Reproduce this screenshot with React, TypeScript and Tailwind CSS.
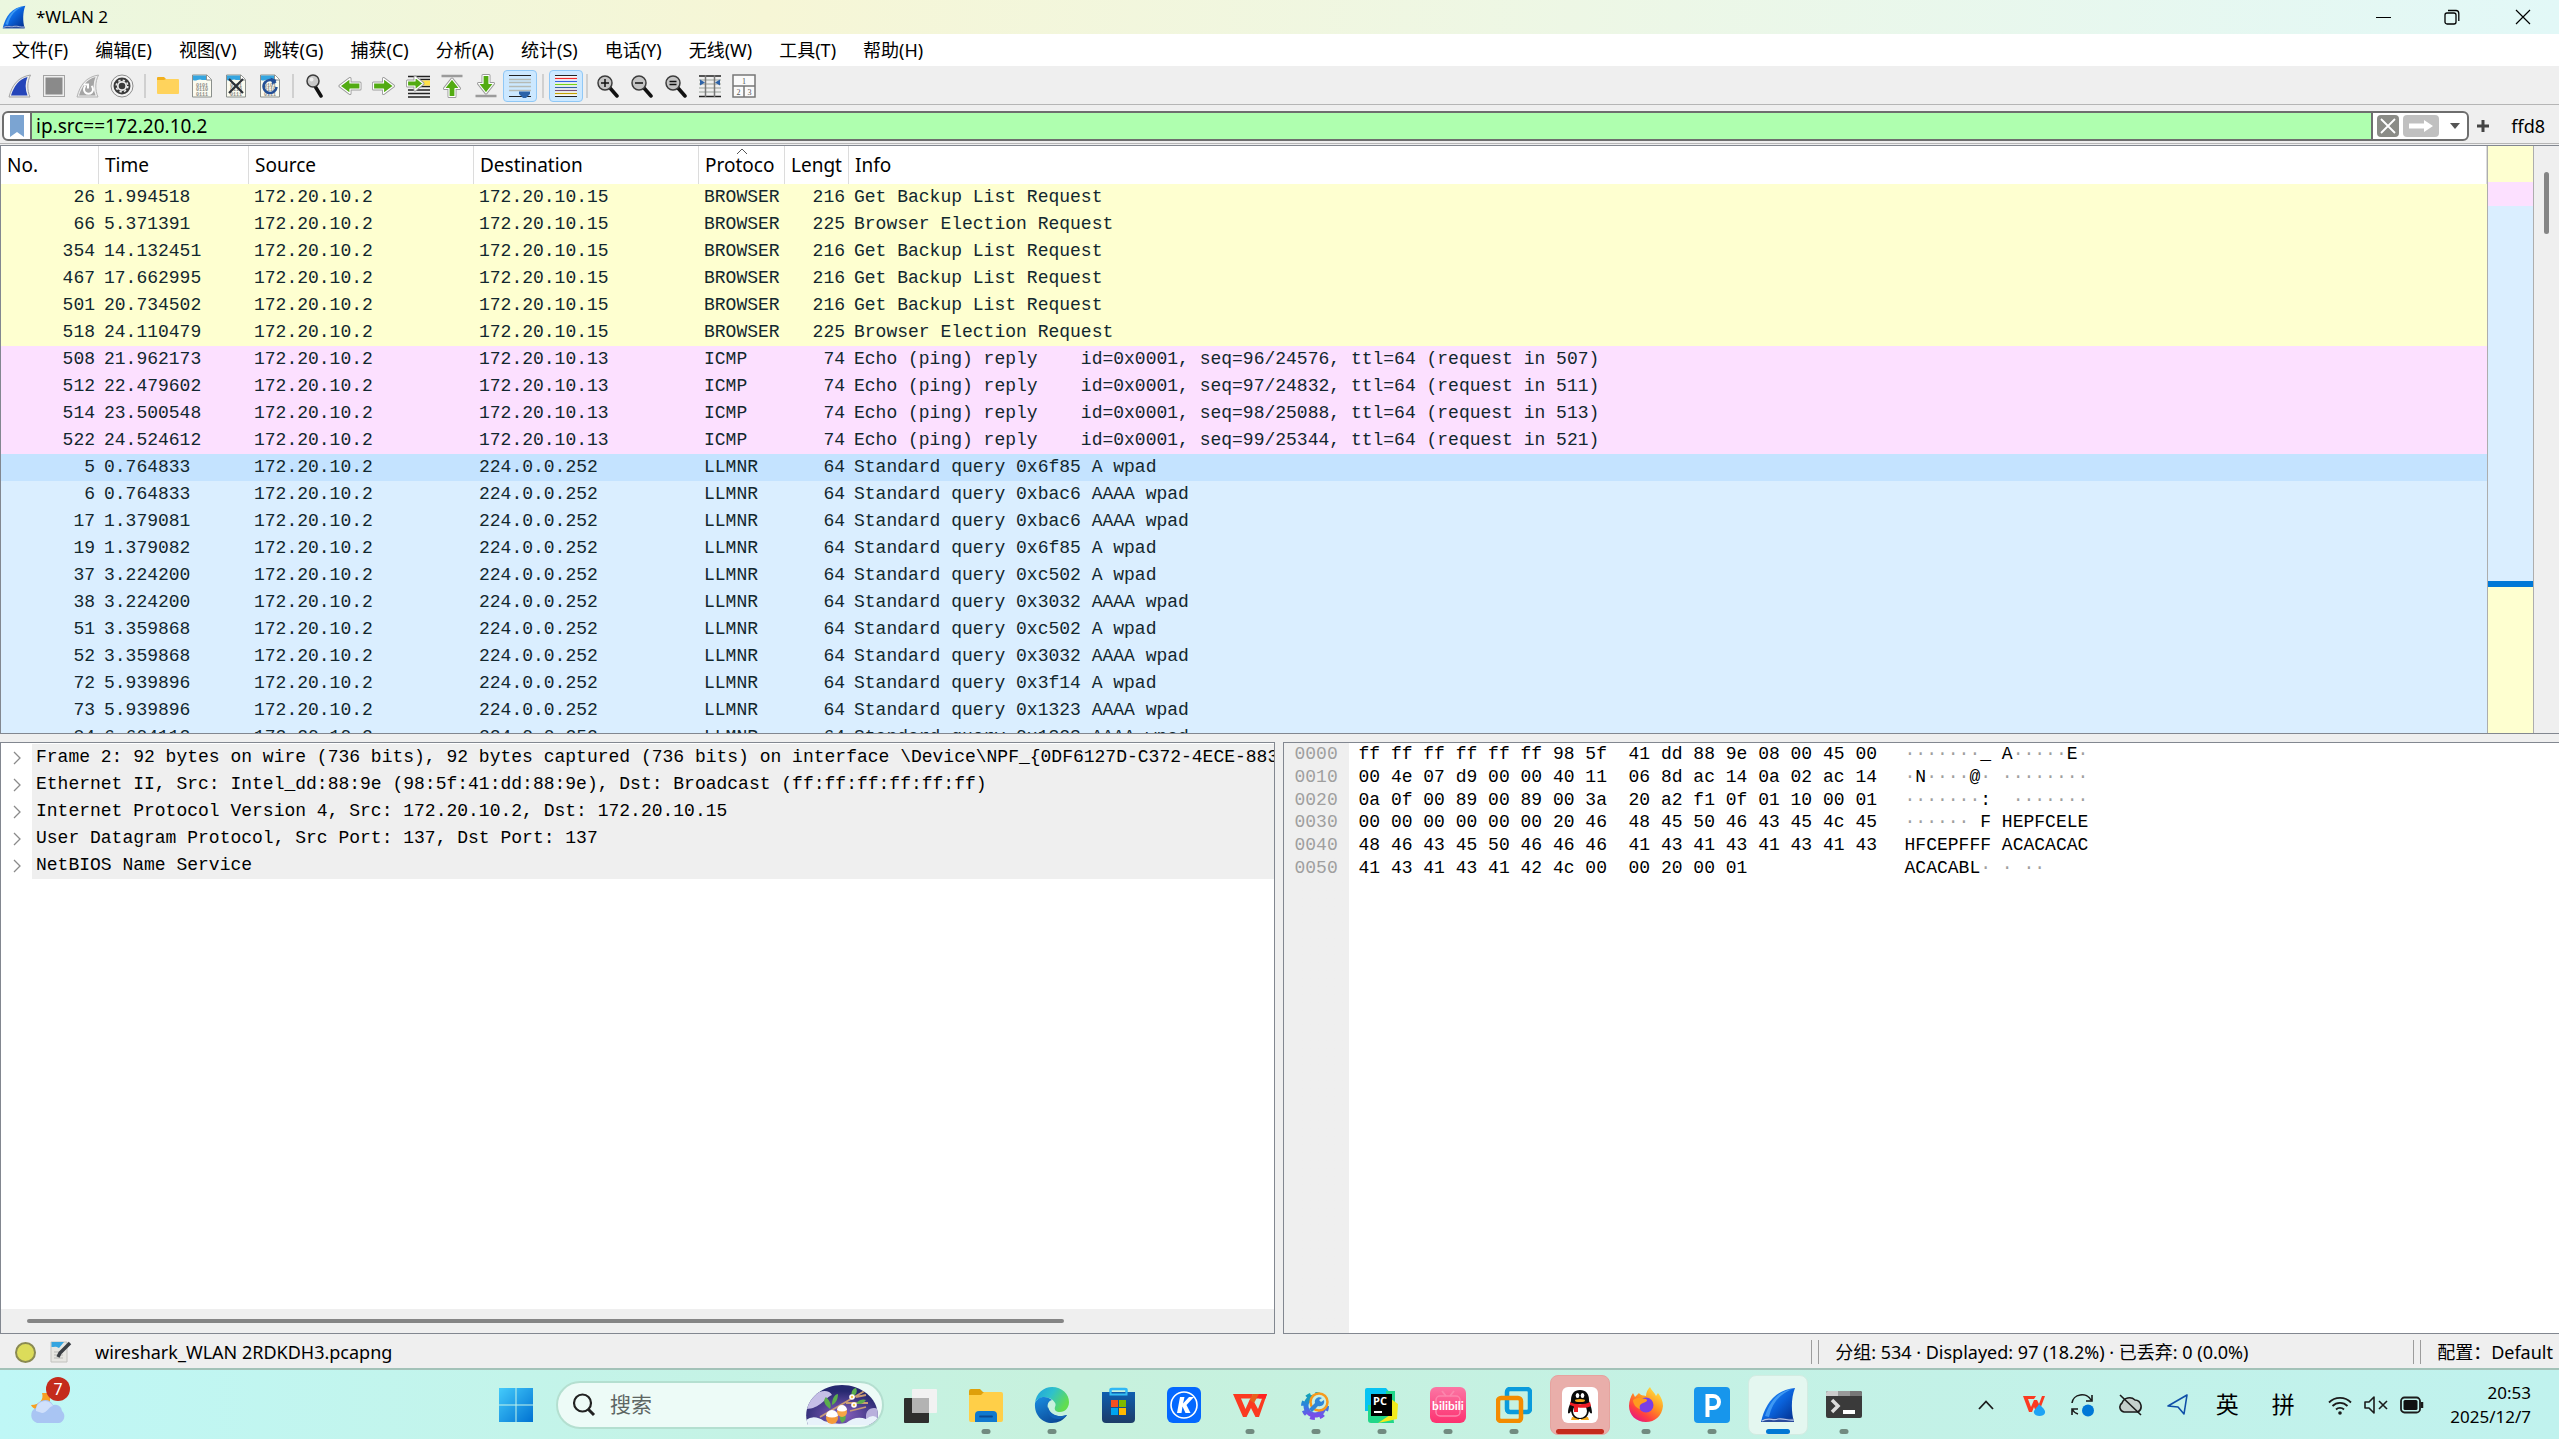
import React from "react";

const UI = "font-['Noto_Sans','Noto_Sans_CJK_SC',sans-serif]";
const MONO = "font-['Liberation_Mono','Noto_Sans_CJK_SC',monospace]";

type Kids = { children?: React.ReactNode };

/* ---------- title bar and toolbar drawings ---------- */

function Fin({ className, uid }: { className: string; uid: string }) {
  return (
    <svg viewBox="0 0 36 36" className={className} aria-hidden="true">
      <defs>
        <linearGradient id={uid} x1="0" y1="0" x2="1" y2="1">
          <stop offset="0" stopColor="#2f9bff" />
          <stop offset="0.5" stopColor="#0a63dc" />
          <stop offset="1" stopColor="#022a86" />
        </linearGradient>
      </defs>
      <path d="M1 35C5 18 14 3 35 1C31 11 31 24 34 35Z" fill={`url(#${uid})`} />
      <path d="M5 29C11 12 20 4 32 2C20 7 12 16 9 30Z" fill="#5db5ff" opacity=".6" />
      <path d="M1 35C6 29 12 32 17 31C23 30 28 33 33 31L34 35Z" fill="#2a4c9c" />
      <path d="M2 34C8 30 13 34 18 32C24 31 28 34 34 33" stroke="#b7c8ec" strokeWidth="1.2" fill="none" />
    </svg>
  );
}

function Ico({ children }: Kids) {
  return (
    <svg viewBox="0 0 24 24" className="size-6" aria-hidden="true">
      {children}
    </svg>
  );
}

function Paper({ children }: Kids) {
  return (
    <Ico>
      <path d="M2.5 1H17L21.5 5.5V23H2.5Z" fill="#fbfbf0" stroke="#8a8f8c" />
      <path d="M3 1.500H16.500V6H12C9 4 6 8 3 6Z" fill="#35a5e0" />
      <path d="M16.500 1V6H21.500" fill="#fff" stroke="#8a8f8c" />
      <g fill="#8c8c88" fontSize="5" fontFamily="Liberation Mono" fontWeight="700" textAnchor="middle">
        <text x="12" y="12.500">0101</text>
        <text x="12" y="17">0110</text>
        <text x="12" y="21.500">0111</text>
      </g>
      {children}
    </Ico>
  );
}

function Arrow({ d }: { d: string }) {
  return (
    <>
      <path d={d} fill="#fff" stroke="#9b9b9b" strokeWidth="3" strokeLinejoin="round" />
      <path d={d} fill="#52ab12" stroke="#fff" strokeWidth="1.2" strokeLinejoin="round" />
    </>
  );
}

function Lens({ sign }: { sign: string }) {
  return (
    <Ico>
      <path d="M14 14L21 22" stroke="#111" strokeWidth="3.500" strokeLinecap="round" />
      <circle cx="9" cy="9" r="7" fill="#c4c4c4" stroke="#3c3c3c" strokeWidth="1.500" />
      <path d={sign} stroke="#111" strokeWidth="1.500" />
    </Ico>
  );
}

const toolGroups: { name: string; icon: React.ReactNode; on?: boolean }[][] = [
  [
    {
      name: "开始捕获",
      icon: (
        <Ico>
          <path d="M1 23C4 11 10 3 22.500 1C19 8 19 16 22 23Z" fill="#eee" stroke="#a3a3a3" />
          <path d="M3 21.500C6 12 11 5 19.500 3C17 9 17 15 19.500 21.500Z" fill="#2545b9" />
        </Ico>
      ),
    },
    {
      name: "停止捕获",
      icon: (
        <Ico>
          <rect x="1.500" y="1.500" width="21" height="21" fill="#eee" stroke="#a3a3a3" />
          <rect x="3.500" y="3.500" width="17" height="17" fill="#8a8a8a" />
        </Ico>
      ),
    },
    {
      name: "重新捕获",
      icon: (
        <Ico>
          <path d="M1 23C4 11 10 3 22.500 1C19 8 19 16 22 23Z" fill="#eee" stroke="#b3b3b3" />
          <path d="M3 21.500C6 12 11 5 19.500 3C17 9 17 15 19.500 21.500Z" fill="#a5a5a5" />
          <path d="M9.500 12A4.500 4.500 0 1 0 15.500 12M8 10.500H12V14.500" stroke="#fff" strokeWidth="2" fill="none" />
        </Ico>
      ),
    },
    {
      name: "捕获选项",
      icon: (
        <Ico>
          <circle cx="12" cy="12" r="11" fill="#f4f4f4" stroke="#8c8c8c" />
          <circle cx="12" cy="12" r="8.500" fill="#3b3b3b" />
          <circle cx="12" cy="12" r="4.200" fill="none" stroke="#e9e9e9" strokeWidth="1.800" />
          <circle cx="12" cy="12" r="5.800" fill="none" stroke="#e9e9e9" strokeWidth="1.600" strokeDasharray="2.280 2.280" />
        </Ico>
      ),
    },
  ],
  [
    {
      name: "打开",
      icon: (
        <Ico>
          <path d="M1 4Q1 3 2 3H8L10 5H12V9H1Z" fill="#f2b01e" />
          <path d="M1 6H8L10 5H22Q23 5 23 6V19Q23 20 22 20H2Q1 20 1 19Z" fill="#ffd35c" />
        </Ico>
      ),
    },
    { name: "保存", icon: <Paper /> },
    {
      name: "关闭文件",
      icon: (
        <Paper>
          <path d="M5 5L19 19M19 5L5 19" stroke="#2b2f36" strokeWidth="2.200" />
        </Paper>
      ),
    },
    {
      name: "重新加载",
      icon: (
        <Paper>
          <path d="M17.500 9A6.500 6.500 0 1 0 18.500 13" stroke="#234f96" strokeWidth="2.500" fill="none" />
          <path d="M12.500 3.500L18.500 6L14.500 11Z" fill="#234f96" />
        </Paper>
      ),
    },
  ],
  [
    {
      name: "查找分组",
      icon: (
        <Ico>
          <path d="M11.500 13L17 22" stroke="#111" strokeWidth="3.500" strokeLinecap="round" />
          <circle cx="9" cy="7" r="6" fill="#c9c9c9" stroke="#3c3c3c" strokeWidth="1.500" />
          <circle cx="7.500" cy="5.500" r="2" fill="#eee" />
        </Ico>
      ),
    },
    { name: "后退", icon: <Ico><Arrow d="M22 9H12V4.500L2 12L12 19.500V15H22Z" /></Ico> },
    { name: "前进", icon: <Ico><Arrow d="M1.500 9H11.500V4.500L21.500 12L11.500 19.500V15H1.500Z" /></Ico> },
    {
      name: "转到分组",
      icon: (
        <Ico>
          <path d="M2 2.500H24M14 5.500H24M14 12.500H24M2 16H24M2 19.500H24M2 23H24" stroke="#222" strokeWidth="1.300" />
          <rect x="15" y="6.500" width="9" height="5" fill="#ffe14a" />
          <Arrow d="M1.500 7H9V3L17 9.500L9 16V12H1.500Z" />
        </Ico>
      ),
    },
    {
      name: "首个分组",
      icon: (
        <Ico>
          <path d="M1.500 2H22.500" stroke="#9b9b9b" strokeWidth="2.500" />
          <Arrow d="M9 22.500V14.500H4.500L12 5L19.500 14.500H15V22.500Z" />
        </Ico>
      ),
    },
    {
      name: "末个分组",
      icon: (
        <Ico>
          <path d="M1.500 22H22.500" stroke="#9b9b9b" strokeWidth="2.500" />
          <Arrow d="M9 1.500V9.500H4.500L12 19L19.500 9.500H15V1.500Z" />
        </Ico>
      ),
    },
    {
      name: "自动滚动",
      on: true,
      icon: (
        <Ico>
          <path d="M1 1.500H23M1 22.500H23" stroke="#222" strokeWidth="1.200" />
          <path d="M1 5.500H23M1 8.500H23M1 12.500H23M1 16.500H23" stroke="#b5bab5" strokeWidth="1.500" />
          <path d="M11 17.500H22V20L18 24H15L11 20Z" fill="#2b62a8" />
        </Ico>
      ),
    },
  ],
  [
    {
      name: "着色",
      on: true,
      icon: (
        <Ico>
          <rect x="1" y="1" width="22" height="22" fill="#f3f6f8" />
          <g strokeWidth="1.200">
            <path d="M1 1.500H23M1 22.500H23" stroke="#222" />
            <path d="M1 4.500H23" stroke="#ef2929" />
            <path d="M1 7.500H23" stroke="#3465e0" />
            <path d="M1 10.500H23" stroke="#73d216" />
            <path d="M1 13.500H23" stroke="#3465a4" />
            <path d="M1 16.500H23" stroke="#75507b" />
            <path d="M1 19.500H23" stroke="#c4a000" />
          </g>
        </Ico>
      ),
    },
  ],
  [
    { name: "放大", icon: <Lens sign="M5 9H13M9 5V13" /> },
    { name: "缩小", icon: <Lens sign="M5 9H13" /> },
    { name: "正常大小", icon: <Lens sign="M5.500 7.500H12.500M5.500 10.500H12.500" /> },
    {
      name: "调整列宽",
      icon: (
        <Ico>
          <path d="M1 2H23M1 22.500H23" stroke="#222" strokeWidth="1.300" />
          <path d="M1 6H23M1 10H23M1 14H23M1 18H23" stroke="#b5bab5" strokeWidth="1.500" />
          <path d="M7.500 1V23M16.500 1V23" stroke="#777" strokeWidth="1.500" />
          <path d="M2 5.500L7 8.500L2 11.500ZM22 5.500L17 8.500L22 11.500Z" fill="#2b62a8" />
        </Ico>
      ),
    },
    {
      name: "重置布局",
      icon: (
        <Ico>
          <path d="M1 1H23V23H1ZM1 12H23M12 12V23" fill="#fafafa" stroke="#777" strokeWidth="1.500" />
          <g fontSize="8" fill="#555" fontFamily="Liberation Serif" textAnchor="middle">
            <text x="12" y="9.500">1</text>
            <text x="6.500" y="20.500">2</text>
            <text x="17.500" y="20.500">3</text>
          </g>
        </Ico>
      ),
    },
  ],
];

/* ---------- data ---------- */

const menus = ["文件(F)", "编辑(E)", "视图(V)", "跳转(G)", "捕获(C)", "分析(A)", "统计(S)", "电话(Y)", "无线(W)", "工具(T)", "帮助(H)"];

type Packet = [string, string, string, string, string, string];
const ping = (n: number, s: string, r: number) => `Echo (ping) reply    id=0x0001, seq=${n}/${s}, ttl=64 (request in ${r})`;
const packets: Packet[] = [
  ["26", "1.994518", "172.20.10.15", "BROWSER", "216", "Get Backup List Request"],
  ["66", "5.371391", "172.20.10.15", "BROWSER", "225", "Browser Election Request"],
  ["354", "14.132451", "172.20.10.15", "BROWSER", "216", "Get Backup List Request"],
  ["467", "17.662995", "172.20.10.15", "BROWSER", "216", "Get Backup List Request"],
  ["501", "20.734502", "172.20.10.15", "BROWSER", "216", "Get Backup List Request"],
  ["518", "24.110479", "172.20.10.15", "BROWSER", "225", "Browser Election Request"],
  ["508", "21.962173", "172.20.10.13", "ICMP", "74", ping(96, "24576", 507)],
  ["512", "22.479602", "172.20.10.13", "ICMP", "74", ping(97, "24832", 511)],
  ["514", "23.500548", "172.20.10.13", "ICMP", "74", ping(98, "25088", 513)],
  ["522", "24.524612", "172.20.10.13", "ICMP", "74", ping(99, "25344", 521)],
  ["5", "0.764833", "224.0.0.252", "LLMNR", "64", "Standard query 0x6f85 A wpad"],
  ["6", "0.764833", "224.0.0.252", "LLMNR", "64", "Standard query 0xbac6 AAAA wpad"],
  ["17", "1.379081", "224.0.0.252", "LLMNR", "64", "Standard query 0xbac6 AAAA wpad"],
  ["19", "1.379082", "224.0.0.252", "LLMNR", "64", "Standard query 0x6f85 A wpad"],
  ["37", "3.224200", "224.0.0.252", "LLMNR", "64", "Standard query 0xc502 A wpad"],
  ["38", "3.224200", "224.0.0.252", "LLMNR", "64", "Standard query 0x3032 AAAA wpad"],
  ["51", "3.359868", "224.0.0.252", "LLMNR", "64", "Standard query 0xc502 A wpad"],
  ["52", "3.359868", "224.0.0.252", "LLMNR", "64", "Standard query 0x3032 AAAA wpad"],
  ["72", "5.939896", "224.0.0.252", "LLMNR", "64", "Standard query 0x3f14 A wpad"],
  ["73", "5.939896", "224.0.0.252", "LLMNR", "64", "Standard query 0x1323 AAAA wpad"],
  ["84", "6.604112", "224.0.0.252", "LLMNR", "64", "Standard query 0x1323 AAAA wpad"],
];

const rowTone: Record<string, string> = {
  BROWSER: "bg-[#feffd0]",
  ICMP: "bg-[#fce0ff]",
  LLMNR: "bg-[#daeeff]",
};

const details = [
  "Frame 2: 92 bytes on wire (736 bits), 92 bytes captured (736 bits) on interface \\Device\\NPF_{0DF6127D-C372-4ECE-8836-",
  "Ethernet II, Src: Intel_dd:88:9e (98:5f:41:dd:88:9e), Dst: Broadcast (ff:ff:ff:ff:ff:ff)",
  "Internet Protocol Version 4, Src: 172.20.10.2, Dst: 172.20.10.15",
  "User Datagram Protocol, Src Port: 137, Dst Port: 137",
  "NetBIOS Name Service",
];

const hex = [
  ["0000", "ff ff ff ff ff ff 98 5f  41 dd 88 9e 08 00 45 00", "·······_ A·····E·"],
  ["0010", "00 4e 07 d9 00 00 40 11  06 8d ac 14 0a 02 ac 14", "·N····@· ········"],
  ["0020", "0a 0f 00 89 00 89 00 3a  20 a2 f1 0f 01 10 00 01", "·······:  ·······"],
  ["0030", "00 00 00 00 00 00 20 46  48 45 50 46 43 45 4c 45", "······ F HEPFCELE"],
  ["0040", "48 46 43 45 50 46 46 46  41 43 41 43 41 43 41 43", "HFCEPFFF ACACACAC"],
  ["0050", "41 43 41 43 41 42 4c 00  00 20 00 01", "ACACABL· · ··"],
];

/* ---------- taskbar drawings ---------- */

function App36({ children }: Kids) {
  return (
    <svg viewBox="0 0 36 36" className="size-9" aria-hidden="true">
      {children}
    </svg>
  );
}

const apps: { name: string; icon: React.ReactNode; mark?: string; box?: string }[] = [
  {
    name: "任务视图",
    icon: (
      <App36>
        <rect x="2" y="11" width="25" height="25" rx="1" fill="#2e2e2d" />
        <rect x="10" y="2" width="25" height="24" rx="1" fill="#f2f2f2" />
        <rect x="10" y="11" width="17" height="15" fill="#b3b3b3" />
      </App36>
    ),
  },
  {
    name: "文件资源管理器",
    mark: "w-[9px] bg-[#718b80]",
    icon: (
      <App36>
        <path d="M1 4Q1 2 3 2H12L15 5H33V12H1Z" fill="#dfa00a" />
        <path d="M1 8H13L16 5H33Q35 5 35 7V33Q35 35 33 35H3Q1 35 1 33Z" fill="#ffcf48" />
        <path d="M7 35V28Q7 24 11 24H25Q29 24 29 28V35Z" fill="#0f79cf" />
        <path d="M12 29.500H24" stroke="#0a4a92" strokeWidth="1.800" strokeLinecap="round" />
      </App36>
    ),
  },
  {
    name: "Edge",
    mark: "w-[9px] bg-[#718b80]",
    icon: (
      <App36>
        <defs>
          <linearGradient id="edgeTop" x1="0" y1="0" x2="1" y2=".5">
            <stop offset="0" stopColor="#1f9fe0" />
            <stop offset=".5" stopColor="#2fc1cb" />
            <stop offset="1" stopColor="#62dd4f" />
          </linearGradient>
          <linearGradient id="edgeLow" x1="0" y1="0" x2=".6" y2="1">
            <stop offset="0" stopColor="#1a8fe3" />
            <stop offset="1" stopColor="#0b4a98" />
          </linearGradient>
        </defs>
        <path d="M1 16C2 6 10 0 18 0C28 0 35 7 35 15C35 21 31 25 26 25C22 25 20 23 21 20C23 17 20 13 15 11C9 9 3 11 1 16Z" fill="url(#edgeTop)" />
        <path d="M1 16C4 9 12 8 18 13C14 14 13 18 14 21C16 28 24 31 33 28C30 33 24 36 18 36C8 36 0 28 1 16Z" fill="url(#edgeLow)" />
        <path d="M14 20C12 27 18 33 26 32C29 31 32 30 33 28C25 31 16 28 14 20Z" fill="#1264b8" />
      </App36>
    ),
  },
  {
    name: "Microsoft Store",
    icon: (
      <App36>
        <defs>
          <linearGradient id="store" x1="0" y1="0" x2="0" y2="1">
            <stop offset="0" stopColor="#0f5fb0" />
            <stop offset="1" stopColor="#1d3c68" />
          </linearGradient>
        </defs>
        <path d="M10.500 8V3Q10.500 2 12 2H25Q26.500 2 26.500 3V8" fill="none" stroke="#2fb8f5" strokeWidth="2.500" />
        <path d="M2 5H35V32Q35 36 31 36H6Q2 36 2 32Z" fill="url(#store)" />
        <path d="M10.500 5V7.500H26.500V5" fill="none" stroke="#35bdf3" strokeWidth="2" />
        <rect x="11" y="13" width="7" height="7" fill="#f25022" />
        <rect x="19" y="13" width="7" height="7" fill="#7fba00" />
        <rect x="11" y="21" width="7" height="7" fill="#00a4ef" />
        <rect x="19" y="21" width="7" height="7" fill="#ffb900" />
      </App36>
    ),
  },
  {
    name: "酷狗音乐",
    icon: (
      <App36>
        <rect x="1" width="34" height="36" rx="6" fill="#0468ff" />
        <circle cx="18" cy="18" r="13" fill="none" stroke="#fff" strokeWidth="1.600" />
        <path d="M14 10H18.500L17 16.500L23 10H28L20.500 18L24.500 26H19.500L16.500 19.500L15.500 26H11Z" fill="#fff" />
      </App36>
    ),
  },
  {
    name: "WPS Office",
    mark: "w-[9px] bg-[#718b80]",
    icon: (
      <App36>
        <path d="M1 7H21L19.500 11.500H9L13.500 22L17.500 13H21L26 22L30 11.500H27L28.500 7H35L27 30H23.500L19 21L14.500 30H11Z" fill="#fb3a21" />
        <path d="M23 7H35L33.500 11.500H21.500Z" fill="#ff2222" />
        <path d="M17.500 13L21 7H27L22 16Z" fill="#e8601c" />
      </App36>
    ),
  },
  {
    name: "系统工具",
    mark: "w-[9px] bg-[#718b80]",
    icon: (
      <App36>
        <defs>
          <linearGradient id="gear" x1="0" y1="0" x2="0" y2="1">
            <stop offset="0" stopColor="#12a4b6" />
            <stop offset=".5" stopColor="#2f7fe0" />
            <stop offset="1" stopColor="#7a4bea" />
          </linearGradient>
        </defs>
        <circle cx="17" cy="19" r="9" fill="none" stroke="url(#gear)" strokeWidth="5" />
        <circle cx="17" cy="19" r="12" fill="none" stroke="url(#gear)" strokeWidth="4" strokeDasharray="4.710 4.710" />
        <circle cx="21" cy="15" r="8.500" fill="#c9efe2" stroke="#f79a1c" strokeWidth="2.500" />
        <path d="M24 11C20 9 16 12 17 16L11 22L14 25L20 19C24 20 27 17 26 13L23 15L21 13Z" fill="#2f86d8" />
      </App36>
    ),
  },
  {
    name: "PyCharm",
    mark: "w-[9px] bg-[#718b80]",
    icon: (
      <App36>
        <path d="M1 3Q1 1 3 1H22L28 8V24H1Z" fill="#07c3f2" />
        <path d="M4 18H28L30 36H7Q4 36 4 33Z" fill="#21d789" />
        <path d="M22 4H31V16L22 20Z" fill="#21d789" />
        <path d="M27 12L34 17L33 32L24 34L14 36L26 28Z" fill="#f3ea1c" />
        <rect x="7" y="7" width="21" height="22" fill="#000" />
        <text x="9" y="18" fontSize="11" fontWeight="700" fill="#fff" fontFamily="Open Sans">PC</text>
        <rect x="10" y="24" width="8" height="2" fill="#fff" />
      </App36>
    ),
  },
  {
    name: "哔哩哔哩",
    mark: "w-[9px] bg-[#718b80]",
    icon: (
      <App36>
        <defs>
          <linearGradient id="bili" x1="0" y1="0" x2="0" y2="1">
            <stop offset="0" stopColor="#fb76a4" />
            <stop offset="1" stopColor="#fd3170" />
          </linearGradient>
        </defs>
        <rect width="36" height="36" rx="6" fill="url(#bili)" />
        <rect x="6" y="9" width="24" height="20" rx="4" fill="none" stroke="#fc86ad" strokeWidth="1.500" />
        <path d="M12 4L16 9M24 4L20 9" stroke="#fc86ad" strokeWidth="1.800" />
        <text x="18" y="23" fontSize="12" fontWeight="700" fill="#fff" textAnchor="middle" fontFamily="Lato">bilibili</text>
      </App36>
    ),
  },
  {
    name: "VMware",
    mark: "w-[9px] bg-[#718b80]",
    icon: (
      <App36>
        <rect x="11" y="2" width="23" height="23" rx="3" fill="none" stroke="#0a9bdc" strokeWidth="4.500" />
        <rect x="2" y="11" width="23" height="23" rx="3" fill="none" stroke="#f38b00" strokeWidth="4.500" />
        <path d="M11 14V22Q11 25 14 25H22" fill="none" stroke="#0a9bdc" strokeWidth="4" />
      </App36>
    ),
  },
  {
    name: "QQ",
    mark: "w-12 bg-[#c42b1c]",
    box: "bg-[#e9aeaa] border-[#e5a39f]",
    icon: (
      <App36>
        <rect width="36" height="36" rx="6" fill="#fff" />
        <path d="M10 30H17V33H9ZM19 30H26L27 33H19Z" fill="#f5a91b" />
        <path d="M18 3C12 3 9 7 9 13C9 16 6 20 6 26C7 27 8 26 9 24C10 30 13 32 18 32S26 30 27 24C28 26 29 27 30 26C30 20 27 16 27 13C27 7 24 3 18 3Z" fill="#0a0a0a" />
        <ellipse cx="18" cy="24" rx="7" ry="7" fill="#fff" />
        <path d="M8 15C13 18 23 18 28 15L29 19C26 21 20 21 16 20.500V25H12V19.500L8 18Z" fill="#ee1c25" />
        <ellipse cx="15.500" cy="8.500" rx="1.800" ry="2.500" fill="#fff" />
        <ellipse cx="20.500" cy="8.500" rx="1.800" ry="2.500" fill="#fff" />
        <ellipse cx="18" cy="13.500" rx="5" ry="1.500" fill="#f5a91b" />
      </App36>
    ),
  },
  {
    name: "Firefox",
    mark: "w-[9px] bg-[#718b80]",
    icon: (
      <App36>
        <defs>
          <linearGradient id="fox" x1=".9" y1="0" x2=".2" y2="1">
            <stop offset="0" stopColor="#fff04a" />
            <stop offset=".45" stopColor="#ff9420" />
            <stop offset=".75" stopColor="#ff4040" />
            <stop offset="1" stopColor="#e3128c" />
          </linearGradient>
        </defs>
        <path d="M22 0C23 3 27 6 28 9L30 6C33 10 35 14 35 19C34 29 27 35 18 35C8 35 1 28 1 19C1 14 3 9 5 6L7 10L11 6C13 9 15 8 18 9C18 5 20 2 22 0Z" fill="url(#fox)" />
        <circle cx="18" cy="18" r="7.500" fill="#7a3ee6" />
        <path d="M5 13C9 10 13 11 18 12C20 13 19 15 15 16C12 17 11 19 12 22C8 21 5 17 5 13Z" fill="#ff9a1f" />
      </App36>
    ),
  },
  {
    name: "PixPin",
    mark: "w-[9px] bg-[#718b80]",
    icon: (
      <App36>
        <rect width="36" height="36" rx="4" fill="#1796ec" />
        <path d="M13.500 30V9H19A5.800 5.800 0 0 1 19 21H13.500" fill="none" stroke="#fff" strokeWidth="4" />
      </App36>
    ),
  },
  {
    name: "Wireshark",
    mark: "w-6 bg-[#0078d4]",
    box: "bg-[#e4f7f0] border-[#d2ece2]",
    icon: <Fin className="size-9" uid="finTask" />,
  },
  {
    name: "终端",
    mark: "w-[9px] bg-[#718b80]",
    icon: (
      <App36>
        <rect y="4" width="36" height="27" rx="2" fill="#3a3a3a" />
        <path d="M0 9V6Q0 4 2 4H12V9Z" fill="#ccc" />
        <path d="M12 4H24V9H12Z" fill="#999" />
        <path d="M24 4H34Q36 4 36 6V9H24Z" fill="#777" />
        <path d="M6 13L12 19L6 25" stroke="#dcdcdc" strokeWidth="3.500" fill="none" />
        <rect x="17" y="23" width="12" height="4" fill="#fff" />
      </App36>
    ),
  },
];

function Tray({ name, width, children }: Kids & { name: string; width: string }) {
  return (
    <button type="button" aria-label={name} className={`flex h-12 shrink-0 items-center justify-center ${width}`}>
      {children}
    </button>
  );
}

function Tray24({ children }: Kids) {
  return (
    <svg viewBox="0 0 24 24" className="size-6" fill="none" stroke="#1b1b1b" strokeWidth="1.600" aria-hidden="true">
      {children}
    </svg>
  );
}

/* ---------- page parts ---------- */

function TitleBar() {
  return (
    <header className="flex h-[34px] shrink-0 items-center bg-linear-to-r from-[#ebf7df] via-[#f6f6d6] via-30% to-[#e2f8f7] pl-0.5">
      <Fin className="size-6" uid="finTitle" />
      <h1 className="ml-2.5 flex-1 text-[17px]">*WLAN 2</h1>
      <button type="button" aria-label="最小化" className="flex h-full w-[68px] items-center justify-center">
        <span className="h-px w-[15px] bg-black" />
      </button>
      <button type="button" aria-label="还原" className="flex h-full w-[70px] items-center justify-center">
        <svg viewBox="0 0 16 16" className="size-4" fill="none" stroke="#000" strokeWidth="1.300" aria-hidden="true">
          <rect x="1" y="4" width="11" height="11" rx="2" />
          <path d="M4 1.500H12Q14.800 1.500 14.800 4.500V12" />
        </svg>
      </button>
      <button type="button" aria-label="关闭" className="flex h-full w-[72px] items-center justify-center">
        <svg viewBox="0 0 16 16" className="size-4" stroke="#000" strokeWidth="1.200" aria-hidden="true">
          <path d="M1 1L15 15M15 1L1 15" />
        </svg>
      </button>
    </header>
  );
}

function Toolbar() {
  return (
    <div className="flex h-[39px] shrink-0 items-center border-b border-[#b5b5b5] pt-0.5 pl-[3px]">
      {toolGroups.map((group, i) => (
        <React.Fragment key={i}>
          {i > 0 && <span className={`h-6 w-0.5 bg-[#d0d0d0] ${i > 3 ? "mx-[3px]" : "mx-[5px]"}`} />}
          {group.map((t) => (
            <button
              key={t.name}
              type="button"
              aria-label={t.name}
              className={`flex h-8 w-[34px] items-center justify-center rounded-sm border ${t.on ? "border-[#90c8f6] bg-[#cce8ff]" : "border-transparent"}`}
            >
              {t.icon}
            </button>
          ))}
        </React.Fragment>
      ))}
    </div>
  );
}

function FilterBar() {
  return (
    <div className="flex h-[39px] shrink-0 items-center border-b border-[#b5b5b5] pt-[3px] pl-0.5">
      <div className="flex h-[30px] min-w-0 flex-1 items-center overflow-hidden rounded-md border-2 border-[#6e6e6e] bg-white">
        <button type="button" aria-label="过滤器书签" className="flex w-[26px] shrink-0 justify-center">
          <svg viewBox="0 0 14 22" className="h-[22px] w-3.5" aria-hidden="true">
            <path d="M0 0H14V22L7 17L0 22Z" fill="#7ba4d2" />
          </svg>
        </button>
        <input
          aria-label="显示过滤器"
          defaultValue="ip.src==172.20.10.2"
          className="h-full min-w-0 flex-1 border-x-2 border-[#6e6e6e] bg-[#afffaf] px-1 text-[19px] outline-none"
        />
        <button type="button" aria-label="清除" className="ml-1 flex size-[22px] items-center justify-center rounded-sm bg-[#8b8c87]">
          <svg viewBox="0 0 16 16" className="size-4" stroke="#fff" strokeWidth="1.800" aria-hidden="true">
            <path d="M1 1L15 15M15 1L1 15" />
          </svg>
        </button>
        <button type="button" aria-label="应用" className="ml-1 flex h-[22px] w-9 items-center justify-center rounded-sm bg-[#c0c0c0]">
          <svg viewBox="0 0 26 14" className="h-3.5 w-[26px]" aria-hidden="true">
            <path d="M1 4.500H16V1L25 7L16 13V9.500H1Z" fill="#fff" />
          </svg>
        </button>
        <button type="button" aria-label="最近的过滤器" className="flex w-7 items-center justify-center pl-1">
          <svg viewBox="0 0 10 6" className="h-1.5 w-2.5" aria-hidden="true">
            <path d="M0 0H10L5 6Z" fill="#555" />
          </svg>
        </button>
      </div>
      <button type="button" aria-label="添加过滤器按钮" className="ml-2 flex size-3 items-center justify-center">
        <svg viewBox="0 0 12 12" className="size-3" stroke="#444" strokeWidth="3" aria-hidden="true">
          <path d="M6 0V12M0 6H12" />
        </svg>
      </button>
      <button type="button" className="mr-3.5 ml-[22px] text-lg">ffd8</button>
    </div>
  );
}

function PacketList() {
  const th = "border-r border-[#dcdcdc] px-1.5 text-left font-normal whitespace-nowrap overflow-hidden";
  return (
    <section aria-label="分组列表" className="mt-px flex min-h-0 flex-[588] overflow-hidden border border-r-0 border-[#828790] bg-white">
      <div className="min-w-0 flex-1 overflow-hidden">
        <table className={`w-full table-fixed border-separate border-spacing-0 text-[18px] text-[#12272e] ${MONO}`}>
          <colgroup>
            <col className="w-[98px]" />
            <col className="w-[150px]" />
            <col className="w-[225px]" />
            <col className="w-[225px]" />
            <col className="w-[86px]" />
            <col className="w-[64px]" />
            <col />
          </colgroup>
          <thead className={`text-[19px] text-black ${UI}`}>
            <tr className="h-[38px]">
              <th className={th}>No.</th>
              <th className={th}>Time</th>
              <th className={th}>Source</th>
              <th className={th}>Destination</th>
              <th className={`${th} relative`} aria-sort="ascending">
                <svg viewBox="0 0 12 6" className="absolute top-0.5 left-1/2 h-1.5 w-3 -translate-x-1/2" fill="none" stroke="#555" aria-hidden="true">
                  <path d="M1 6L6 1L11 6" />
                </svg>
                Protoco
              </th>
              <th className={th}>Lengt</th>
              <th className={th}>Info</th>
            </tr>
          </thead>
          <tbody>
            {packets.map(([no, time, dst, proto, len, info]) => (
              <tr key={no} className={`h-[27px] leading-[27px] whitespace-pre ${no === "5" ? "bg-[#c4e3ff]" : rowTone[proto]}`}>
                <td className="pr-1 text-right">{no}</td>
                <td className="pl-[5px]">{time}</td>
                <td className="pl-[5px]">172.20.10.2</td>
                <td className="pl-[5px]">{dst}</td>
                <td className="pl-[5px]">{proto}</td>
                <td className="pr-1 text-right">{len}</td>
                <td className="pl-[5px]">{info}</td>
              </tr>
            ))}
          </tbody>
        </table>
      </div>
      <div className="flex w-[47px] shrink-0 flex-col border-x border-[#adadad]" aria-hidden="true">
        <div className="flex-[36] bg-[#feffd0]" />
        <div className="flex-[24] bg-[#fce0ff]" />
        <div className="flex-[374] bg-[#daeeff]" />
        <div className="h-1.5 bg-[#0078d7]" />
        <div className="flex-[146] bg-[#feffd0]" />
      </div>
      <div className="flex w-[25px] shrink-0 flex-col bg-[#efefef] pt-[26px] pl-2.5">
        <div className="h-[62px] w-[5px] rounded-full bg-[#858585]" />
      </div>
    </section>
  );
}

function DetailPane() {
  return (
    <section aria-label="分组详情" className="flex min-w-0 flex-[1274] flex-col overflow-hidden border border-[#828790] bg-white">
      <ul className={`flex-1 overflow-hidden pt-px text-[18px] leading-[27px] whitespace-pre ${MONO}`}>
        {details.map((line) => (
          <li key={line} className="flex">
            <button type="button" aria-label="展开" className="flex w-[31px] shrink-0 items-center justify-center">
              <svg viewBox="0 0 8 14" className="h-3.5 w-2" fill="none" stroke="#8a8a8a" strokeWidth="1.300" aria-hidden="true">
                <path d="M1 1L7 7L1 13" />
              </svg>
            </button>
            <span className="min-w-0 flex-1 overflow-hidden bg-[#efefef] pl-1">{line}</span>
          </li>
        ))}
      </ul>
      <div className="flex h-6 items-center bg-[#efefef] pr-[210px] pl-[26px]">
        <div className="h-1 flex-1 rounded-full bg-[#858585]" />
      </div>
    </section>
  );
}

function BytesPane() {
  return (
    <section aria-label="分组字节流" className="flex min-w-0 flex-[1277] border border-r-0 border-[#828790] bg-white">
      <div className="flex flex-1 bg-linear-to-r from-[#efefef] from-[65px] to-white to-[65px]">
        <table className={`h-[136px] text-[18px] leading-[22px] whitespace-pre ${MONO}`}>
          <tbody>
            {hex.map(([off, bytes, text]) => (
              <tr key={off}>
                <th scope="row" className="w-[65px] py-0 pr-0 pl-[11px] text-left font-normal text-[#9f9f9f]">{off}</th>
                <td className="w-[556px] pl-2.5">{bytes}</td>
                <td>
                  {text.split("").map((c, i) => (
                    <span key={i} className={c === "·" ? "text-[#9f9f9f]" : ""}>{c}</span>
                  ))}
                </td>
              </tr>
            ))}
          </tbody>
        </table>
      </div>
    </section>
  );
}

function Grip() {
  return <span className="h-6 w-2 shrink-0 border-x border-[#9c9c9c]" />;
}

function StatusBar() {
  return (
    <footer className="flex h-[34px] shrink-0 items-center pt-0.5 text-lg whitespace-nowrap">
      <button type="button" aria-label="专家信息" className="ml-[15px] size-[21px] rounded-full border-2 border-[#8a8a52] bg-[#dcdc5a]" />
      <button type="button" aria-label="捕获文件注释" className="ml-3.5">
        <svg viewBox="0 0 22 22" className="size-[22px]" aria-hidden="true">
          <path d="M1 1H17V21H1Z" fill="#e6e6e2" stroke="#c2c2be" />
          <path d="M1.500 1H14L9 7C6 5 4 6 1.500 6Z" fill="#35a5e0" />
          <path d="M4 11H13M4 14H13M4 17H13" stroke="#b7b7b3" />
          <path d="M20 2L10 12L8 16" stroke="#3a3f44" strokeWidth="3.500" fill="none" />
        </svg>
      </button>
      <span className="ml-[23px] flex-1">wireshark_WLAN 2RDKDH3.pcapng</span>
      <Grip />
      <span className="w-[594px] pl-4">分组: 534 · Displayed: 97 (18.2%) · 已丢弃: 0 (0.0%)</span>
      <Grip />
      <button type="button" className="mr-1.5 ml-4">配置：Default</button>
    </footer>
  );
}

function Taskbar() {
  return (
    <nav
      aria-label="任务栏"
      className="flex h-[71px] shrink-0 items-center border-t-2 border-[#a3c2b8] bg-linear-to-r from-[#bff7f6] via-[#c7f1dd] via-42% to-[#c0f2ee] whitespace-nowrap"
    >
      <div className="flex flex-[516]">
        <button type="button" aria-label="天气" className="relative ml-7 h-12 w-12">
          <svg viewBox="0 0 40 40" className="size-10" aria-hidden="true">
            <path d="M14 8C16 14 12 20 3 20C6 26 16 28 22 20V8Z" fill="#f7a022" />
            <path d="M9 38A8 8 0 0 1 8 23A9 9 0 0 1 25 20A7 7 0 0 1 34 26A7 7 0 0 1 31 38Z" fill="#a9c5f3" />
            <path d="M8 26A9 9 0 0 1 25 21C20 22 19 28 14 28Z" fill="#d0e0fb" />
          </svg>
          <span className="absolute -top-1 left-[18px] flex size-6 items-center justify-center rounded-full bg-[#c42b1c] text-base text-white">7</span>
        </button>
      </div>
      <div className="flex shrink-0 items-center">
        <button type="button" aria-label="开始" className="mr-[22px]">
          <svg viewBox="0 0 36 36" className="size-9" aria-hidden="true">
            <defs>
              <linearGradient id="win" x1="0" y1="0" x2="1" y2="1">
                <stop offset="0" stopColor="#44cbfb" />
                <stop offset="1" stopColor="#0072d2" />
              </linearGradient>
            </defs>
            <path d="M1 1H17.500V17.500H1ZM18.500 1H35V17.500H18.500ZM1 18.500H17.500V35H1ZM18.500 18.500H35V35H18.500Z" fill="url(#win)" />
          </svg>
        </button>
        <label className="mr-1.5 flex h-12 w-[328px] items-center overflow-hidden rounded-full border-2 border-[#b4dfd0] bg-[#edfbf7] pl-3.5">
          <svg viewBox="0 0 24 24" className="size-6 shrink-0" fill="none" stroke="#222" strokeWidth="2.200" aria-hidden="true">
            <circle cx="10.500" cy="10" r="8.500" />
            <path d="M16.500 16.500L22 22" strokeWidth="3" />
          </svg>
          <input placeholder="搜索" aria-label="搜索" className="ml-3.5 min-w-0 flex-1 bg-transparent text-[21px] outline-none placeholder:text-[#5d6663]" />
          <svg viewBox="0 0 72 40" className="mr-1 h-10 w-[72px] shrink-0" aria-hidden="true">
            <defs>
              <clipPath id="dome"><path d="M2 40C-6 18 14 0 36 0S78 18 70 40Z" /></clipPath>
              <radialGradient id="night" cx=".5" cy=".75" r=".6">
                <stop offset="0" stopColor="#8a62c0" />
                <stop offset="1" stopColor="#26286f" />
              </radialGradient>
            </defs>
            <g clipPath="url(#dome)">
              <rect width="72" height="40" fill="url(#night)" />
              <path d="M0 24C4 6 22 2 26 10C20 12 14 24 0 24Z" fill="#c5bfe6" />
              <path d="M60 30A8 8 0 0 1 72 24V36H60Z" fill="#b8b0dc" />
              <path d="M14 32L62 4M40 18L62 18M44 26L60 22M50 12L60 10" stroke="#c99b74" strokeWidth="1.800" />
              <path d="M24 24C16 18 18 14 20 12C24 16 26 20 24 24ZM26 20C26 12 30 9 32 9C32 14 30 18 26 20ZM46 12C44 6 48 3 50 3C52 7 50 10 46 12ZM36 28C42 30 40 36 36 38C33 34 33 31 36 28ZM50 18C54 14 58 14 60 15C57 19 54 20 50 18Z" fill="#5cae4c" />
              <path d="M0 40V35Q8 29 18 36Q30 40 40 38Q50 30 60 34Q68 28 72 34V40Z" fill="#e8f2fa" />
              <circle cx="26" cy="33" r="6" fill="#f59a3a" />
              <circle cx="36" cy="27" r="5" fill="#f7a545" />
              <path d="M20 31A6 6 0 0 1 32 31Q26 34 20 31ZM31 25A5 5 0 0 1 41 25Q36 28 31 25Z" fill="#fff" />
              <circle cx="46" cy="12" r="2.800" fill="#fff" /><circle cx="48" cy="20" r="2.800" fill="#fff" />
              <circle cx="46" cy="12" r="1.200" fill="#f5c64a" /><circle cx="48" cy="20" r="1.200" fill="#f5c64a" />
            </g>
          </svg>
        </label>
        <div className="flex gap-1.5">
          {apps.map((a) => (
            <button
              key={a.name}
              type="button"
              aria-label={a.name}
              className={`relative flex size-[60px] items-center justify-center rounded-lg border ${a.box ?? "border-transparent"}`}
            >
              {a.icon}
              {a.mark && <span className={`absolute bottom-0 left-1/2 h-[5px] -translate-x-1/2 rounded-full ${a.mark}`} />}
            </button>
          ))}
        </div>
      </div>
      <div className="flex flex-[681] items-center justify-end pr-7">
        <Tray name="显示隐藏的图标" width="w-12">
          <svg viewBox="0 0 16 10" className="h-2.5 w-4" fill="none" stroke="#1b1b1b" strokeWidth="1.800" aria-hidden="true">
            <path d="M1 9L8 1.500L15 9" />
          </svg>
        </Tray>
        <Tray name="WPS 云" width="w-12">
          <Tray24>
            <path d="M1 3H14L12 6H6L9 14L12 7H15L17 11L20 3H23L17 19H14L12 14L10 19H7Z" fill="#fb3a21" stroke="none" />
            <path d="M17 11C20 14 24 17 23 20C22 24 13 24 12 20C11 17 15 15 17 11Z" fill="#1ea4f5" stroke="none" />
          </Tray24>
        </Tray>
        <Tray name="更新" width="w-12">
          <Tray24>
            <path d="M2 10A10 9 0 0 1 21 7M22 2V8H16M2 22V16H8M2 16A10 9 0 0 0 8 21" />
            <circle cx="18" cy="17.500" r="6" fill="#0078d7" stroke="none" />
          </Tray24>
        </Tray>
        <Tray name="OneDrive" width="w-12">
          <Tray24>
            <path d="M6 19A5 5 0 0 1 4 10A8 8 0 0 1 17 7A6.500 6.500 0 0 1 20 19Z" fill="#c5cfcc" />
            <path d="M2 2L23 22" />
          </Tray24>
        </Tray>
        <Tray name="位置" width="w-12">
          <Tray24>
            <path d="M21 2L18 21L12 14L2 13Z" stroke="#0f4fa8" strokeLinejoin="round" />
          </Tray24>
        </Tray>
        <Tray name="输入语言" width="w-[50px]"><span className="text-[23px]">英</span></Tray>
        <Tray name="输入法" width="w-[62px]"><span className="text-[23px]">拼</span></Tray>
        <button type="button" aria-label="网络、音量和电池" className="mr-[26px] ml-3.5 flex h-12 items-center gap-3">
          <Tray24>
            <path d="M1 9.500A15.500 15.500 0 0 1 23 9.500M4.500 13A10.500 10.500 0 0 1 19.500 13M8 16.500A5.700 5.700 0 0 1 16 16.500" strokeWidth="1.800" />
            <circle cx="12" cy="20" r="1.800" fill="#1b1b1b" stroke="none" />
          </Tray24>
          <Tray24>
            <path d="M1 9H5L10 4V20L5 15H1Z" strokeLinejoin="round" />
            <path d="M15 8L23 16M23 8L15 16" />
          </Tray24>
          <Tray24>
            <rect x="1" y="4.500" width="19" height="15" rx="3.500" strokeWidth="1.800" />
            <rect x="3.500" y="7" width="14" height="10" rx="1.500" fill="#111" stroke="none" />
            <path d="M22 9V15" strokeWidth="2.500" />
          </Tray24>
        </button>
        <button type="button" className="text-right text-[17px] leading-6">
          <span className="block">20:53</span>
          <span className="block">2025/12/7</span>
        </button>
      </div>
    </nav>
  );
}

export default function App() {
  return (
    <div className={`flex h-screen flex-col overflow-hidden bg-[#efefef] text-black ${UI}`}>
      <TitleBar />
      <nav aria-label="菜单" className="flex h-8 shrink-0 items-center gap-[27px] bg-white pl-3 text-lg whitespace-nowrap">
        {menus.map((m) => (
          <button key={m} type="button">{m}</button>
        ))}
      </nav>
      <Toolbar />
      <FilterBar />
      <PacketList />
      <div className="mt-2 flex min-h-0 flex-[593] gap-2">
        <DetailPane />
        <BytesPane />
      </div>
      <StatusBar />
      <Taskbar />
    </div>
  );
}
